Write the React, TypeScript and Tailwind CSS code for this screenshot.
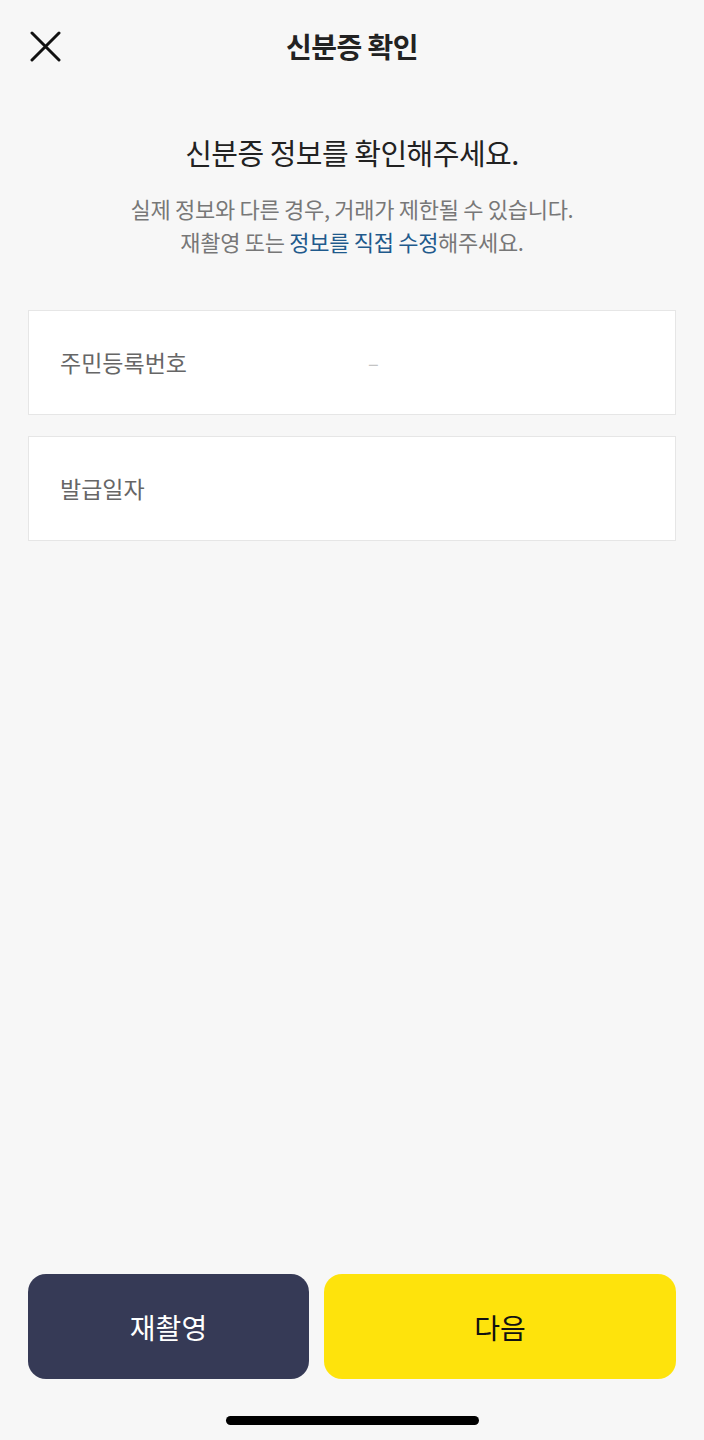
import React from 'react';

const font = { fontFamily: '"Noto Sans CJK KR", "Noto Sans", sans-serif' };

const InfoRow = ({ label, value }: { label: string; value?: string }) => (
  <div className="flex items-center h-[105px] bg-white border border-[#e6e6e6] pl-[31px]">
    <span className="w-[308px] text-[23px] text-[#666666]">{label}</span>
    {value && <span className="text-[20px] text-[#c4c4c4]">{value}</span>}
  </div>
);

export default function App() {
  return (
    <div className="flex flex-col h-[1440px] w-[704px] bg-[#f7f7f7]" style={font}>
      {/* Header */}
      <div className="relative flex items-center justify-center h-[92px]">
        <button className="absolute left-[30px] top-[31px] p-0">
          <svg width="31" height="31" viewBox="0 0 31 31">
            <path d="M2 2 L29 29 M29 2 L2 29" stroke="#111" strokeWidth="3" strokeLinecap="round" />
          </svg>
        </button>
        <h1 className="text-[28px] font-bold text-[#222222] tracking-[-0.5px]">신분증 확인</h1>
      </div>

      {/* Intro */}
      <div className="flex flex-col items-center pt-[38px]">
        <h2 className="text-[29px] text-[#222222] leading-[44px] tracking-[-0.5px]">신분증 정보를 확인해주세요.</h2>
        <p className="mt-[18px] text-[22px] leading-[33px] text-[#777777] text-center tracking-[-0.3px]">
          실제 정보와 다른 경우, 거래가 제한될 수 있습니다.
          <br />
          재촬영 또는 <span className="text-[#1f5a8c]">정보를 직접 수정</span>해주세요.
        </p>
      </div>

      {/* Fields */}
      <div className="flex flex-col gap-[21px] px-[28px] pt-[52px]">
        <InfoRow label="주민등록번호" value="–" />
        <InfoRow label="발급일자" />
      </div>

      <div className="flex-1" />

      {/* Buttons */}
      <div className="flex gap-[15px] px-[28px]">
        <button className="w-[281px] h-[105px] rounded-[18px] bg-[#363a56] text-white text-[28px]">재촬영</button>
        <button className="flex-1 h-[105px] rounded-[18px] bg-[#fee30c] text-[#111111] text-[28px]">다음</button>
      </div>

      {/* Home indicator */}
      <div className="flex justify-center h-[61px] pt-[37px]">
        <div className="w-[253px] h-[9px] rounded-full bg-black" />
      </div>
    </div>
  );
}
